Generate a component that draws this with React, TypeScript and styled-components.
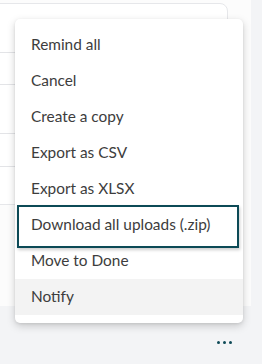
import styled, { createGlobalStyle } from "styled-components";

const GlobalStyle = createGlobalStyle`
    html, body {
        margin: 0;
        padding: 0;
        background: #f3f4f6;
        font-family: Lato, "Noto Sans", sans-serif;
    }
`;

const Screen = styled.div`
    position: relative;
    width: 262px;
    height: 364px;
    overflow: hidden;
    background: #f3f4f6;
`;

const Sheet = styled.div`
    width: 251px;
    height: 306px;
    background: #fcfcfc;
    padding-top: 3px;
    box-sizing: border-box;
`;

const Card = styled.div`
    margin-left: -12px;
    width: 238px;
    height: 200px;
    border: 1px solid #e6e7ea;
    border-radius: 8px;
    background: #fff;
`;

const Row = styled.div<{ h: number }>`
    height: ${(p) => p.h}px;
    border-bottom: 1px solid #e3e4e7;
`;

const Footer = styled.div`
    display: flex;
    justify-content: flex-end;
    padding: 35px 30px 0 0;
`;

const Dots = styled.div`
    display: flex;
    gap: 3px;
`;

const Dot = styled.span`
    width: 3px;
    height: 3px;
    border-radius: 50%;
    background: #0e4a57;
`;

const Menu = styled.ul`
    position: absolute;
    left: 15px;
    top: 19px;
    width: 228px;
    margin: 0;
    padding: 8px 0;
    list-style: none;
    background: #fff;
    border-radius: 5px;
    box-shadow: 0 3px 8px rgba(0, 0, 0, 0.18), 0 1px 3px rgba(0, 0, 0, 0.08);
`;

const Item = styled.li<{ active?: boolean; focused?: boolean }>`
    position: relative;
    height: 36px;
    box-sizing: border-box;
    display: flex;
    align-items: center;
    padding: 0 0 3px 16px;
    font-size: 15.4px;
    color: #3d3d3d;
    background: ${(p) => (p.active ? "#f3f3f3" : "transparent")};

    ${(p) =>
        p.focused &&
        `
        &::after {
            content: "";
            position: absolute;
            left: 2px;
            right: 4px;
            top: -2px;
            bottom: -5px;
            border: 2px solid #0c4a56;
            box-shadow: 1px 2px 3px rgba(0, 0, 0, 0.2);
        }
    `}
`;

const items = [
    "Remind all",
    "Cancel",
    "Create a copy",
    "Export as CSV",
    "Export as XLSX",
    "Download all uploads (.zip)",
    "Move to Done",
    "Notify",
];

const App = () => {
    return (
        <Screen>
            <GlobalStyle />
            <Sheet>
                <Card>
                    <Row h={48} />
                    <Row h={31} />
                    <Row h={48} />
                    <Row h={32} />
                </Card>
            </Sheet>
            <Footer>
                <Dots>
                    <Dot />
                    <Dot />
                    <Dot />
                </Dots>
            </Footer>
            <Menu>
                {items.map((label, i) => (
                    <Item key={label} focused={i === 5} active={i === 7}>
                        {label}
                    </Item>
                ))}
            </Menu>
        </Screen>
    );
};

export default App;
